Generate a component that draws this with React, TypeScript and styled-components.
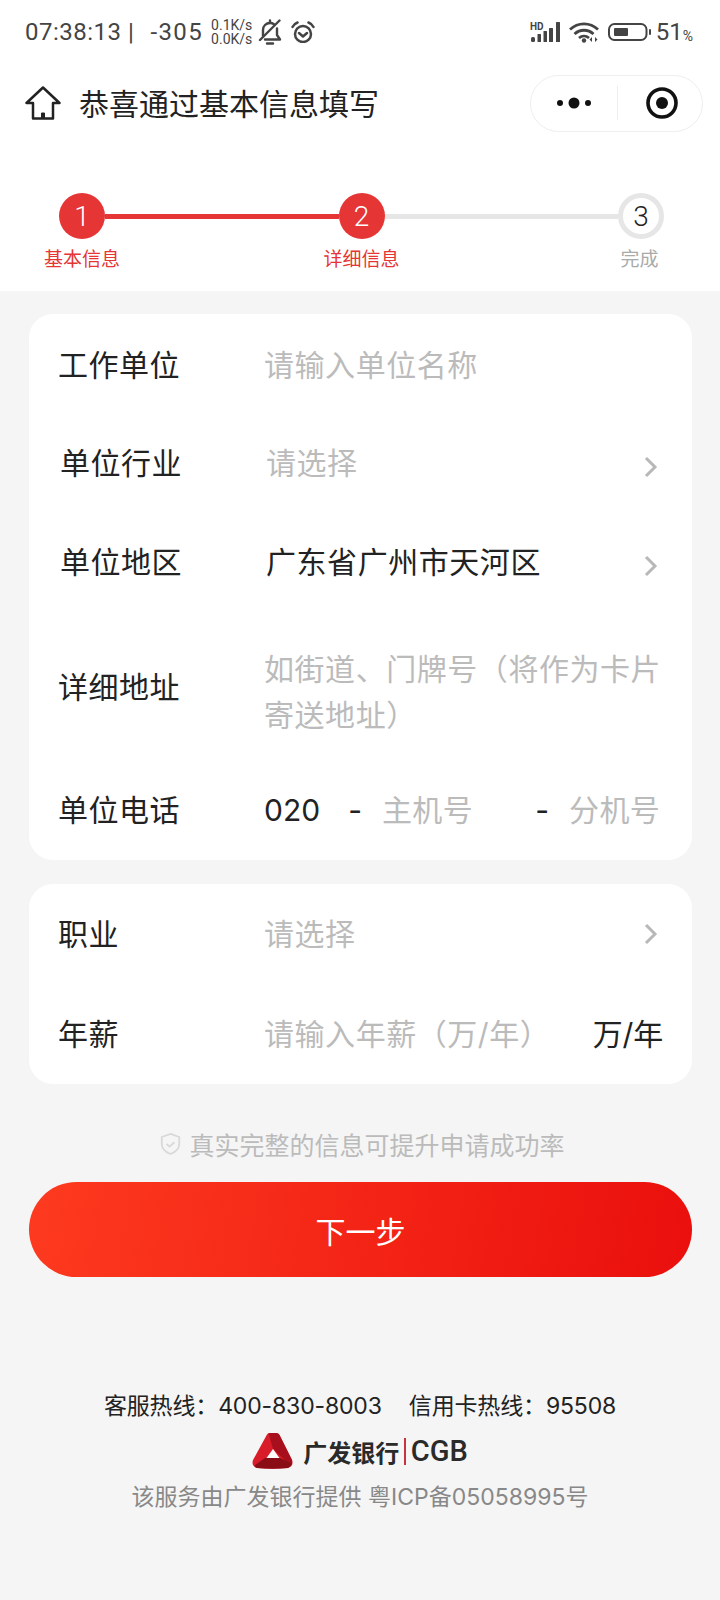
import React from 'react';
import styled, { createGlobalStyle } from 'styled-components';

const GlobalStyle = createGlobalStyle`
  html, body { margin: 0; padding: 0; background: #f5f5f5; }
  body { font-family: Inter, "Noto Sans CJK SC", sans-serif; }
`;

const Page = styled.div`
  width: 720px;
  height: 1600px;
  overflow: hidden;
  background: #f5f5f5;
  color: #222;
`;
const TopArea = styled.header`
  background: #fff;
  height: 291px;
  display: flex;
  flex-direction: column;
`;
const StatusBar = styled.div`
  height: 64px;
  padding: 0 27px 0 25px;
  display: flex;
  align-items: center;
  justify-content: space-between;
  color: #444;
  font-family: Roboto, sans-serif;
  font-size: 24px;
  line-height: 1;
`;
const StatusGroup = styled.div`
  display: flex;
  align-items: center;
`;
const Time = styled.span`
  letter-spacing: 0.5px;
  margin-right: 16px;
`;
const Signal = styled.span`
  letter-spacing: 1.4px;
`;
const Speed = styled.span`
  display: flex;
  flex-direction: column;
  font-size: 14px;
  line-height: 14px;
  margin: 0 6px 0 8px;
  text-align: center;
`;
const StatusIcon = styled.svg<{ $gap?: number }>`
  display: block;
  margin-left: ${p => p.$gap ?? 0}px;
`;
const Battery = styled.span`
  margin-left: 5px;
`;
const Percent = styled.span`
  font-size: 14px;
  align-self: flex-end;
  margin-bottom: 1px;
`;
const NavBar = styled.div`
  height: 78px;
  padding: 0 17px 0 25px;
  display: flex;
  align-items: center;
`;
const Title = styled.h1`
  margin: 2px 0 0 18px;
  flex: 1;
  font-size: 30px;
  font-weight: 400;
  line-height: 1;
  color: #222;
`;
const Capsule = styled.div`
  width: 173px;
  height: 57px;
  box-sizing: border-box;
  border: 1px solid #eee;
  border-radius: 29px;
  display: flex;
  align-items: center;
`;
const MenuCell = styled.div`
  width: 86px;
  display: flex;
  justify-content: center;
`;
const CloseCell = styled.div`
  flex: 1;
  padding-left: 4px;
  display: flex;
  justify-content: center;
`;
const CapsuleDivider = styled.div`
  width: 1px;
  height: 34px;
  background: #eee;
`;
const Stepper = styled.div`
  display: flex;
  padding: 51px 56px 0 59px;
`;
const Step = styled.div`
  width: 46px;
  display: flex;
  flex-direction: column;
  align-items: center;
`;
const StepDot = styled.div<{ $done?: boolean }>`
  width: 46px;
  height: 46px;
  box-sizing: border-box;
  border-radius: 50%;
  display: flex;
  align-items: center;
  justify-content: center;
  font-family: Roboto, sans-serif;
  font-weight: 300;
  font-size: 28px;
  background: ${p => (p.$done ? '#e53535' : '#fff')};
  color: ${p => (p.$done ? '#fff' : '#222')};
  border: ${p => (p.$done ? 'none' : '5px solid #e6e6e6')};
`;
const StepLabel = styled.div<{ $done?: boolean }>`
  margin-top: 8px;
  margin-right: ${p => (p.$done ? 0 : 3)}px;
  font-size: 19px;
  line-height: 26px;
  white-space: nowrap;
  color: ${p => (p.$done ? '#e53535' : '#aaa')};
`;
const StepLine = styled.div<{ $done?: boolean }>`
  flex: 1;
  height: 5px;
  margin-top: 21px;
  background: ${p => (p.$done ? '#e53535' : '#e6e6e6')};
`;
const Main = styled.main`
  padding: 23px 28px 0 29px;
  display: flex;
  flex-direction: column;
  gap: 24px;
`;
const Actions = styled.div`
  padding: 0 28px 0 29px;
`;
const Card = styled.section`
  background: #fff;
  border-radius: 24px;
`;
const Row = styled.div<{ $h: number; $inset?: boolean }>`
  height: ${p => p.$h}px;
  box-sizing: border-box;
  padding: 0 30px 0 ${p => (p.$inset ? 31 : 29)}px;
  display: grid;
  grid-template-columns: 206px 1fr;
  align-items: center;
  font-size: 30px;
  line-height: 46px;
`;
const Label = styled.div`
  color: #222;
  letter-spacing: 0.5px;
`;
const Value = styled.div<{ $muted?: boolean; $drop?: number }>`
  display: flex;
  align-items: center;
  justify-content: space-between;
  padding-top: ${p => p.$drop ?? 0}px;
  letter-spacing: 0.55px;
  color: ${p => (p.$muted ? '#bbb' : '#222')};
`;
const Unit = styled.span`
  color: #222;
  letter-spacing: -0.2px;
  margin-right: -1px;
`;
const Chevron = styled.svg<{ $drop?: number }>`
  width: 14px;
  height: 22px;
  margin-right: 4px;
  transform: translateY(${p => p.$drop ?? 0}px);
`;
const Phone = styled.div`
  display: flex;
  align-items: center;
  white-space: nowrap;
  color: #222;
`;
const Dash = styled.span<{ $left: number }>`
  margin: 0 20px 0 ${p => p.$left}px;
`;
const PhonePart = styled.span`
  letter-spacing: 0.4px;
  color: #bbb;
`;
const Hint = styled.div`
  margin-top: 24px;
  padding-left: 4px;
  display: flex;
  align-items: center;
  justify-content: center;
  gap: 8px;
  height: 72px;
  color: #bbb;
  font-size: 25px;
`;
const NextButton = styled.button`
  display: block;
  width: 100%;
  height: 95px;
  margin-top: 2px;
  border: none;
  border-radius: 48px;
  background: linear-gradient(100deg, #fd3a1f 0%, #ea0f0d 100%);
  color: #fff;
  font: inherit;
  font-size: 30px;
`;
const Footer = styled.footer`
  margin-top: 112px;
  display: flex;
  flex-direction: column;
  align-items: center;
`;
const Hotlines = styled.div`
  display: flex;
  gap: 27px;
  font-size: 23px;
  line-height: 34px;
  letter-spacing: -0.15px;
  color: #222;
`;
const Logo = styled.div`
  margin-top: 8px;
  height: 40px;
  display: flex;
  align-items: center;
  color: #2a2a2a;
`;
const LogoName = styled.span`
  margin-left: 10px;
  font-size: 24px;
  font-weight: 700;
`;
const LogoBar = styled.span`
  width: 1.5px;
  height: 27px;
  margin: 0 5px;
  background: #c8323c;
`;
const LogoLatin = styled.span`
  font-family: Roboto, sans-serif;
  font-size: 29px;
  font-weight: 500;
`;
const Provider = styled.div`
  margin-top: 9px;
  font-size: 23px;
  line-height: 34px;
  color: #888;
`;

const RightArrow = ({ drop }: { drop?: number }) => (
  <Chevron $drop={drop} viewBox="0 0 14 22" fill="none" stroke="#b8b8b8" strokeWidth="3">
    <path d="M2 2l9 9-9 9" />
  </Chevron>
);

const App: React.FC = () => (
  <Page>
    <GlobalStyle />
    <TopArea>
      <StatusBar>
        <StatusGroup>
          <Time>07:38:13 |</Time>
          <Signal>-305</Signal>
          <Speed><span>0.1K/s</span><span>0.0K/s</span></Speed>
          <StatusIcon width="24" height="26" viewBox="0 0 24 26" fill="none" stroke="#444" strokeWidth="2.4" strokeLinecap="round" strokeLinejoin="round">
            <path d="M5 17V11c0-4 3-7 7-7 1.500 0 3 .5 4 1.200M19 9.500V16l3 4.500H7" />
            <path d="M21.500 1.500L2 21" />
            <path d="M12 1.500V3M9 24.500h6" />
          </StatusIcon>
          <StatusIcon $gap={9} width="24" height="22" viewBox="0 0 24 22" fill="none" stroke="#444" strokeWidth="2.500" strokeLinecap="round" strokeLinejoin="round">
            <circle cx="12" cy="13" r="8" />
            <path d="M1.500 6c1-2 2.500-3.500 5-4.500M22.500 6c-1-2-2.500-3.500-5-4.500M8 12l4 3.500 4-3.500" />
          </StatusIcon>
        </StatusGroup>
        <StatusGroup>
          <StatusIcon width="32" height="22" viewBox="0 0 32 22" fill="#444">
            <text x="1" y="8.500" fontSize="10" fontWeight="700" fontFamily="Roboto">HD</text>
            <rect x="2" y="16" width="4" height="5" rx="1.500" />
            <rect x="8.500" y="13" width="3.500" height="8" rx="0.500" />
            <rect x="14.500" y="10" width="3.500" height="11" rx="0.500" />
            <rect x="20" y="7" width="4" height="14" rx="0.500" />
            <rect x="27" y="1" width="4" height="20" rx="0.500" />
          </StatusIcon>
          <StatusIcon $gap={8} width="30" height="21" viewBox="0 0 30 21" fill="none" stroke="#444" strokeWidth="2.800">
            <path d="M1 7.500c8-7.500 20-7.500 28 0M5.500 12c5.500-5 13.500-5 19 0M10 16c3-2.500 7-2.500 10 0" />
            <circle cx="15" cy="18.500" r="2.200" fill="#444" stroke="none" />
            <path d="M23 15v5l-2.500-2.500zM26 15v5l2.500-2.500z" fill="#444" stroke="none" />
          </StatusIcon>
          <StatusIcon $gap={9} width="43" height="18" viewBox="0 0 43 18" fill="none">
            <rect x="1" y="1" width="37.500" height="16" rx="5.500" stroke="#444" strokeWidth="2" />
            <rect x="6" y="5" width="14" height="8" rx="1" fill="#444" />
            <rect x="41" y="6" width="2" height="6" rx="1" fill="#444" />
          </StatusIcon>
          <Battery>51</Battery>
          <Percent>%</Percent>
        </StatusGroup>
      </StatusBar>
      <NavBar>
        <svg width="36" height="34" viewBox="0 0 36 34" fill="none" stroke="#222" strokeWidth="2.500" strokeLinejoin="round">
          <path d="M18 1.500L1.500 17H8V32.500H28V17H34.500z" />
          <path d="M16.500 27h3v5.500h-3z" fill="#222" strokeWidth="1" />
        </svg>
        <Title>恭喜通过基本信息填写</Title>
        <Capsule>
          <MenuCell>
            <svg width="36" height="14" viewBox="0 0 36 14" fill="#111">
              <circle cx="4" cy="7" r="3" /><circle cx="18" cy="7" r="5.500" /><circle cx="32" cy="7" r="3" />
            </svg>
          </MenuCell>
          <CapsuleDivider />
          <CloseCell>
            <svg width="32" height="32" viewBox="0 0 32 32" fill="none">
              <circle cx="16" cy="16" r="14" stroke="#111" strokeWidth="3.600" />
              <circle cx="16" cy="16" r="6" fill="#111" />
            </svg>
          </CloseCell>
        </Capsule>
      </NavBar>
      <Stepper>
        <Step><StepDot $done>1</StepDot><StepLabel $done>基本信息</StepLabel></Step>
        <StepLine $done />
        <Step><StepDot $done>2</StepDot><StepLabel $done>详细信息</StepLabel></Step>
        <StepLine />
        <Step><StepDot>3</StepDot><StepLabel>完成</StepLabel></Step>
      </Stepper>
    </TopArea>
    <Main>
      <Card>
        <Row $h={101}><Label>工作单位</Label><Value $muted>请输入单位名称</Value></Row>
        <Row $h={95} $inset><Label>单位行业</Label><Value $muted>请选择<RightArrow drop={4} /></Value></Row>
        <Row $h={104} $inset><Label>单位地区</Label><Value>广东省广州市天河区<RightArrow drop={4} /></Value></Row>
        <Row $h={146}><Label>详细地址</Label><Value $muted $drop={10}>如街道、门牌号（将作为卡片寄送地址）</Value></Row>
        <Row $h={100}>
          <Label>单位电话</Label>
          <Phone>
            <span>020</span><Dash $left={28}>-</Dash>
            <PhonePart>主机号</PhonePart><Dash $left={62}>-</Dash>
            <PhonePart>分机号</PhonePart>
          </Phone>
        </Row>
      </Card>
      <Card>
        <Row $h={100}><Label>职业</Label><Value $muted>请选择<RightArrow /></Value></Row>
        <Row $h={100}>
          <Label>年薪</Label>
          <Value $muted>请输入年薪（万/年）<Unit>万/年</Unit></Value>
        </Row>
      </Card>
    </Main>
    <Actions>
      <Hint>
        <svg width="21" height="26" viewBox="0 0 24 26" fill="none" stroke="#d8d8d8" strokeWidth="2">
          <path d="M12 1.500l10 3.500v8c0 6-5 9.500-10 11.500C7 22.500 2 19 2 13V5z" />
          <path d="M7.500 13l3.500 3 5.500-5" />
        </svg>
        真实完整的信息可提升申请成功率
      </Hint>
      <NextButton type="button">下一步</NextButton>
    </Actions>
    <Footer>
      <Hotlines><span>客服热线：400-830-8003</span><span>信用卡热线：95508</span></Hotlines>
      <Logo>
        <svg width="41" height="36" viewBox="0 0 41 36">
          <path fill="#d81c2a" d="M15 1.500Q15.500 0 18 0H24Q26.500 0 27.500 2L40 27Q42 33 36 35Q20.500 36.500 5 35Q-1 33 1 27Z" />
          <path fill="#a80f1c" d="M16.500 0H24Q26.500 0 27.500 2L40 27Q41 30 38 32L21 16Z" />
          <path fill="#8a0d16" d="M5 35Q20.500 36.500 36 35Q39 34 40 30.500L28 25H13L2.500 32.500Q3 34.500 5 35Z" />
          <path fill="#fff" d="M21 16L27.500 25H14.500Z" />
        </svg>
        <LogoName>广发银行</LogoName>
        <LogoBar />
        <LogoLatin>CGB</LogoLatin>
      </Logo>
      <Provider>该服务由广发银行提供 粤ICP备05058995号</Provider>
    </Footer>
  </Page>
);

export default App;
